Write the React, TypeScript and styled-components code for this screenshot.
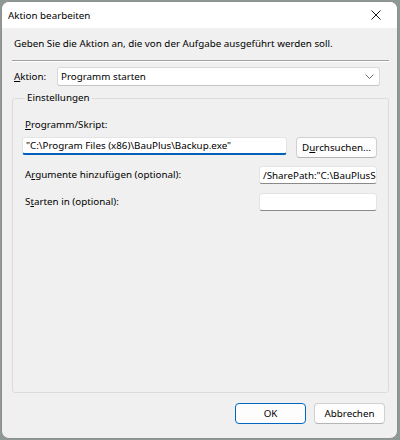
import React from "react";
import styled, { createGlobalStyle } from "styled-components";

const Global = createGlobalStyle`
  html, body { margin: 0; padding: 0; }
  body {
    background: #8d9a94;
    font-family: "Noto Sans", "Segoe UI", sans-serif;
    font-size: 9.8px;
    color: #000;
  }
`;

const Window = styled.div`
  box-sizing: border-box;
  width: 397px;
  height: 438px;
  margin: 1px 0 0 1px;
  border: 1px solid #8f8f8f;
  border-radius: 8px;
  overflow: hidden;
  display: flex;
  flex-direction: column;
  background: #f0f0f0;
`;

const TitleBar = styled.div`
  height: 26px;
  flex: none;
  background: #ffffff;
  display: flex;
  align-items: center;
  justify-content: space-between;
  padding: 0 0 0 6px;
  color: #000;
`;

const CloseButton = styled.div`
  width: 42px;
  height: 26px;
  display: flex;
  align-items: center;
  justify-content: center;
`;

const Body = styled.div`
  flex: 1;
  display: flex;
  flex-direction: column;
  padding: 0 8px 0 10px;
`;

const Instruction = styled.div`
  margin-top: 9px;
  padding-left: 2px;
  line-height: 14px;
`;

const Separator = styled.div`
  margin-top: 9px;
  height: 0;
  border-top: 1px solid #a0a0a0;
  border-bottom: 1px solid #ffffff;
`;

const ActionRow = styled.div`
  margin-top: 5px;
  display: flex;
  align-items: center;
  padding-left: 2px;
`;

const Label = styled.span<{ $w?: number }>`
  width: ${(p) => (p.$w ? `${p.$w}px` : "auto")};
  flex: none;
  line-height: 14px;
  u { text-decoration: underline; text-underline-offset: 1px; }
`;

const Select = styled.div`
  box-sizing: border-box;
  flex: none;
  width: 323px;
  height: 19px;
  background: #fff;
  border: 1px solid #d9d9d9;
  border-bottom-color: #c4c4c4;
  border-radius: 3px;
  display: flex;
  align-items: center;
  justify-content: space-between;
  padding: 0 5px 0 3px;
`;

const Group = styled.fieldset`
  margin: 5px 0 0 0;
  padding: 0 11px 0 9px;
  height: 302px;
  box-sizing: border-box;
  border: 1px solid #dcdcdc;
  border-radius: 3px;
  min-width: 0;
`;

const Legend = styled.legend`
  padding: 0 2px;
  margin-left: 3px;
  line-height: 14px;
`;

const FieldLabel = styled.div`
  padding-left: 3px;
  line-height: 14px;
  margin-top: 13px;
  u { text-decoration: underline; text-underline-offset: 1px; }
`;

const Row = styled.div<{ $mt: number }>`
  display: flex;
  align-items: center;
  justify-content: space-between;
  margin-top: ${(p) => p.$mt}px;
  padding-left: 3px;
`;

const InputRow = styled.div`
  display: flex;
  align-items: flex-start;
  justify-content: space-between;
  margin-top: 5px;
`;

const TextInput = styled.div<{ $w: number; $focus?: boolean }>`
  box-sizing: border-box;
  width: ${(p) => p.$w}px;
  height: 18px;
  background: #fff;
  border: 1px solid #e4e4e4;
  border-bottom: ${(p) => (p.$focus ? "2px solid #005fb8" : "1px solid #8a8a8a")};
  border-radius: 3px;
  padding: 0 3px;
  display: flex;
  align-items: center;
  white-space: nowrap;
  overflow: hidden;
  color: #000;
`;

const Button = styled.div<{ $default?: boolean; $w: number }>`
  box-sizing: border-box;
  width: ${(p) => p.$w}px;
  height: 21px;
  background: #fdfdfd;
  border: 1px solid ${(p) => (p.$default ? "#0067c0" : "#d0d0d0")};
  border-bottom-color: ${(p) => (p.$default ? "#0067c0" : "#b5b5b5")};
  border-radius: 4px;
  display: flex;
  align-items: center;
  justify-content: center;
  color: #000;
  u { text-decoration: underline; text-underline-offset: 1px; }
`;

const Footer = styled.div`
  display: flex;
  justify-content: flex-end;
  gap: 8px;
  margin-top: 10px;
  padding-right: 4px;
`;

export default function App() {
  return (
    <>
      <Global />
      <Window>
        <TitleBar>
          <span>Aktion bearbeiten</span>
          <CloseButton>
            <svg width="10" height="10" viewBox="0 0 10 10">
              <path d="M0.5 0.5 L9.5 9.5 M9.5 0.5 L0.5 9.5" stroke="#1a1a1a" strokeWidth="1" />
            </svg>
          </CloseButton>
        </TitleBar>
        <Body>
          <Instruction>Geben Sie die Aktion an, die von der Aufgabe ausgeführt werden soll.</Instruction>
          <Separator />
          <ActionRow>
            <Label $w={43}>
              <u>A</u>ktion:
            </Label>
            <Select>
              <span>Programm starten</span>
              <svg width="9" height="5" viewBox="0 0 9 5">
                <path d="M0.5 0.5 L4.5 4.5 L8.5 0.5" fill="none" stroke="#6a6a6a" strokeWidth="1" />
              </svg>
            </Select>
          </ActionRow>
          <Group>
            <Legend>Einstellungen</Legend>
            <FieldLabel>
              <u>P</u>rogramm/Skript:
            </FieldLabel>
            <InputRow>
              <TextInput $w={265} $focus>"C:\Program Files (x86)\BauPlus\Backup.exe"</TextInput>
              <Button $w={81}>
                D<u>u</u>rchsuchen...
              </Button>
            </InputRow>
            <Row $mt={8}>
              <Label>
                A<u>r</u>gumente hinzufügen (optional):
              </Label>
              <TextInput $w={118}>/SharePath:"C:\BauPlusServer"</TextInput>
            </Row>
            <Row $mt={9}>
              <Label>
                S<u>t</u>arten in (optional):
              </Label>
              <TextInput $w={118}></TextInput>
            </Row>
          </Group>
          <Footer>
            <Button $w={71} $default>OK</Button>
            <Button $w={71}>Abbrechen</Button>
          </Footer>
        </Body>
      </Window>
    </>
  );
}
